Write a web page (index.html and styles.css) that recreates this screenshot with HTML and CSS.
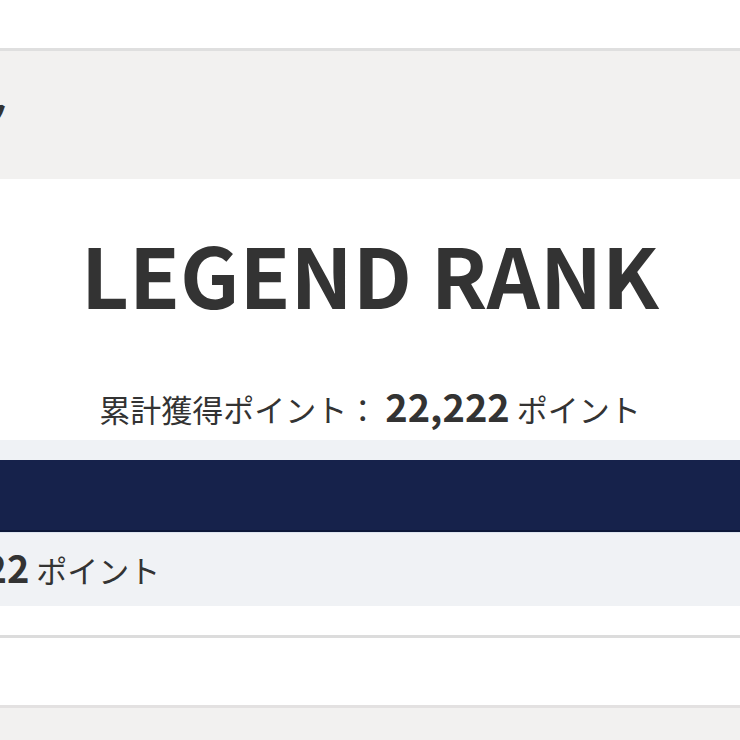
FILE: index.html
```html
<!DOCTYPE html>
<html lang="ja">
<head>
<meta charset="utf-8">
<title>Legend Rank</title>
<link rel="stylesheet" href="styles.css">
</head>
<body>
<div class="page">
  <div class="top-space"></div>
  <div class="head-band">
    <span class="head-title">ランク</span>
  </div>
  <section class="rank">
    <h1 class="rank-name">LEGEND RANK</h1>
    <p class="points"><span class="points-label">累計獲得ポイント：</span> <span class="points-num">22,222</span> <span class="points-unit">ポイント</span></p>
  </section>
  <div class="strip"></div>
  <div class="navy-bar"></div>
  <div class="sub-band">
    <p class="points points-shift"><span class="points-label">累計獲得ポイント：</span> <span class="points-num">22,222</span> <span class="points-unit">ポイント</span></p>
  </div>
  <div class="gap-white"></div>
  <div class="row-white"></div>
  <div class="bottom-band"></div>
</div>
</body>
</html>
```

FILE: styles.css
```css
html, body {
  margin: 0;
  padding: 0;
  background: #ffffff;
}
body {
  font-family: "Noto Sans CJK JP", "Noto Sans", sans-serif;
  color: #333333;
}
.page {
  width: 740px;
  height: 740px;
  overflow: hidden;
}
.top-space {
  height: 48px;
  background: #ffffff;
}
.head-band {
  border-top: 3px solid #dfdfdf;
  background: #f2f1f0;
  overflow: hidden;
  white-space: nowrap;
  padding-top: 46px;
  box-sizing: border-box;
  height: 131px;
}
.head-title {
  display: inline-block;
  margin-left: -82px;
  font-size: 30px;
  font-weight: 700;
  line-height: 1;
  color: #333333;
}
.rank {
  background: #ffffff;
  height: 261px;
  box-sizing: border-box;
  padding-top: 53px;
  text-align: center;
}
.rank-name {
  margin: 0;
  font-size: 83px;
  font-weight: 700;
  line-height: 1;
  color: #333333;
}
.points {
  margin: 72px 0 0;
  font-size: 31px;
  line-height: 1;
  white-space: nowrap;
  color: #333333;
}
.points-num {
  font-size: 38px;
  font-weight: 700;
  line-height: 1;
}
.strip {
  height: 20px;
  background: #eff2f5;
}
.navy-bar {
  height: 70px;
  background: #16224b;
  border-bottom: 2px solid #0d1838;
}
.sub-band {
  height: 74px;
  box-sizing: border-box;
  background: #f0f2f5;
  border-top: 1px solid #dde4ed;
  overflow: hidden;
  padding-top: 15px;
}
.points-shift {
  margin: 0 0 0 -381px;
  text-align: left;
}
.gap-white {
  height: 29px;
  background: #ffffff;
}
.row-white {
  height: 67px;
  background: #ffffff;
  border-top: 3px solid #dcdcdc;
  border-bottom: 3px solid #e3e1e1;
}
.bottom-band {
  height: 40px;
  background: #f2f1f0;
}
```
